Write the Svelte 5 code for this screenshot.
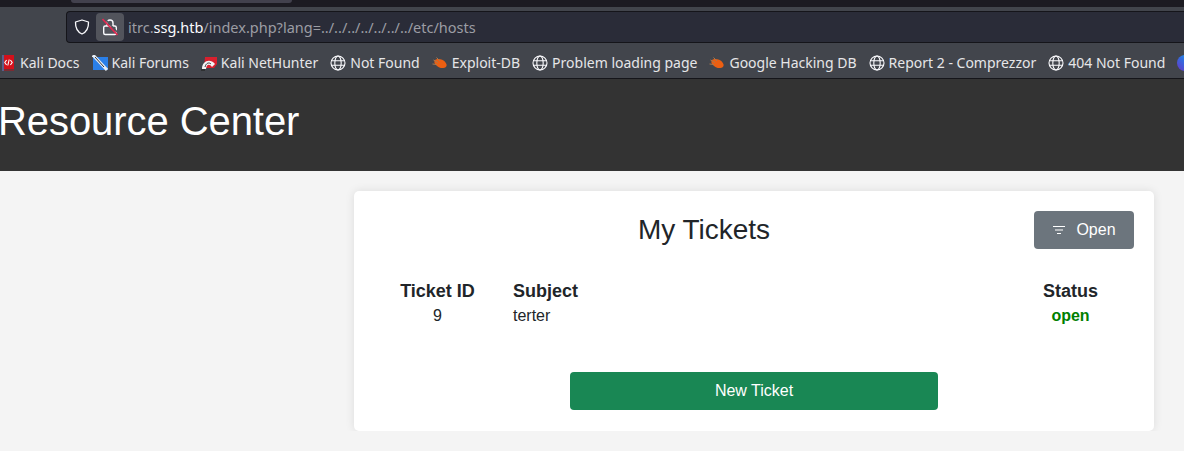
<script>
  const bookmarks = [
    { label: 'Kali Docs', icon: 'docs' },
    { label: 'Kali Forums', icon: 'forums' },
    { label: 'Kali NetHunter', icon: 'nethunter' },
    { label: 'Not Found', icon: 'globe' },
    { label: 'Exploit-DB', icon: 'bug' },
    { label: 'Problem loading page', icon: 'globe' },
    { label: 'Google Hacking DB', icon: 'bug' },
    { label: 'Report 2 - Comprezzor', icon: 'globe' },
    { label: '404 Not Found', icon: 'globe' },
    { label: '', icon: 'blob' }
  ];
</script>

<div class="browser">
  <div class="tabs"><div class="tab"></div></div>
  <div class="toolbar">
    <div class="urlbar">
      <svg class="shield" width="16" height="16" viewBox="0 0 16 16" fill="none" stroke="#fbfbfe" stroke-width="1.3">
        <path d="M8 1 L14.5 3 C14.7 9 12.5 13 8 15 C3.5 13 1.3 9 1.5 3 Z" stroke-linejoin="round" />
      </svg>
      <div class="lock">
        <svg width="16" height="18" viewBox="0 0 16 18" fill="none">
          <path d="M5 8 V5 a3 3 0 0 1 6 0 V8" stroke="#fbfbfe" stroke-width="1.4" />
          <rect x="1.7" y="8" width="12.6" height="8.5" rx="1.5" stroke="#fbfbfe" stroke-width="1.4" />
          <path d="M2 0 L17 16" stroke="#52545c" stroke-width="1.5" />
          <path d="M0.5 1 L15.5 17" stroke="#e22850" stroke-width="1.6" />
        </svg>
      </div>
      <span class="url">itrc.<b>ssg.htb</b>/index.php?lang=../../../../../../../etc/hosts</span>
    </div>
  </div>
  <div class="bookmarks">
    {#each bookmarks as b}
      <div class="bookmark">
        {#if b.icon === 'globe'}
          <svg width="16" height="16" viewBox="0 0 16 16" fill="none" stroke="#fbfbfe" stroke-width="1.1">
            <circle cx="8" cy="8" r="7" />
            <ellipse cx="8" cy="8" rx="3.2" ry="7" />
            <path d="M1 5.7 H15 M1 10.3 H15" />
          </svg>
        {:else if b.icon === 'bug'}
          <svg width="16" height="16" viewBox="0 0 16 16" fill="none">
            <ellipse cx="8.5" cy="8.5" rx="6.5" ry="4" transform="rotate(25 8.5 8.5)" fill="#ec5f12" />
            <path d="M1.5 5 L6 7.5 M0.5 9 L5 9.5 M4.5 2.5 L8 6" stroke="#a8794f" stroke-width="1" />
          </svg>
        {:else if b.icon === 'docs'}
          <svg width="16" height="16" viewBox="0 0 16 16">
            <rect x="2" y="0" width="12" height="15" fill="#d3111b" />
            <rect x="2" y="14" width="12" height="2" fill="#7c2b33" />
            <rect x="2" y="0" width="2" height="16" fill="#5a5f8c" />
            <path d="M6.6 5 L4.8 7.5 L6.6 10 M10.4 5 L12.2 7.5 L10.4 10 M9.2 4.5 L7.8 10.5" fill="none" stroke="#fff" stroke-width="1.1" />
          </svg>
        {:else if b.icon === 'forums'}
          <svg width="16" height="16" viewBox="0 0 16 16">
            <rect x="1" y="2" width="15" height="13" fill="#2a7fe8" />
            <path d="M1 0 L15 15" stroke="#e8eef5" stroke-width="3" />
            <path d="M3 2 L12 12" stroke="#33363b" stroke-width="1" />
          </svg>
        {:else if b.icon === 'nethunter'}
          <svg width="16" height="16" viewBox="0 0 16 16">
            <path d="M4 2 H16 V9 L13 13 H3 Z" fill="#d8202e" />
            <path d="M1 14 C1 6 9 3 14 9 L11 12 C8.5 8.5 5.5 9 5 14 Z" fill="#f4f4f4" />
            <path d="M4 12 C5 8 8 7 10 9" fill="none" stroke="#33363b" stroke-width="1" />
            <path d="M0 15 H4" stroke="#222" stroke-width="1.2" />
          </svg>
        {:else}
          <svg width="16" height="16" viewBox="0 0 16 16">
            <defs>
              <linearGradient id="blob-fill" x1="0" y1="1" x2="1" y2="0">
                <stop offset="0" stop-color="#6a35c9" />
                <stop offset="0.55" stop-color="#2f6fe0" />
                <stop offset="1" stop-color="#22b8e6" />
              </linearGradient>
            </defs>
            <circle cx="8" cy="8" r="8" fill="url(#blob-fill)" />
          </svg>
        {/if}
        {#if b.label}<span>{b.label}</span>{/if}
      </div>
    {/each}
  </div>
</div>

<header class="site-header">
  <h1>Resource Center</h1>
</header>

<main>
  <section class="card">
    <div class="card-top">
      <h3>My Tickets</h3>
      <button class="filter">
        <svg width="14" height="14" viewBox="0 0 14 14" fill="none" stroke="#fff" stroke-width="1.1">
          <path d="M1 3.5 H13 M3 7 H11 M5 10.5 H9" />
        </svg>
        Open
      </button>
    </div>
    <div class="tickets">
      <div class="col-id head">Ticket ID</div>
      <div class="head">Subject</div>
      <div class="col-status head">Status</div>
      <div class="col-id">9</div>
      <div>terter</div>
      <div class="col-status open">open</div>
    </div>
    <div class="actions">
      <button class="new-ticket">New Ticket</button>
    </div>
  </section>
</main>

<style>
  :global(body) {
    margin: 0;
    background: #f4f4f4;
    overflow: hidden;
    font-family: "Liberation Sans", Arial, sans-serif;
  }

  .tabs {
    height: 7px;
    background: #1c1b22;
    padding-left: 71px;
  }
  .tab {
    width: 221px;
    height: 3px;
    background: #42414d;
    border-radius: 0 0 4px 4px;
  }

  .toolbar {
    height: 36px;
    box-sizing: border-box;
    background: #42454c;
    padding: 4px 0 0 66px;
  }
  .urlbar {
    height: 32px;
    box-sizing: border-box;
    display: flex;
    align-items: center;
    background: #2a2c38;
    border: 1px solid #15151a;
    border-right: none;
    border-radius: 4px 0 0 4px;
    padding-left: 7px;
    font-family: "Noto Sans", sans-serif;
    font-size: 14.5px;
    color: #9c9da4;
  }
  .shield {
    flex: none;
  }
  .lock {
    width: 28px;
    height: 28px;
    margin: 0 4px 0 6px;
    display: flex;
    align-items: center;
    justify-content: center;
    background: #52545c;
    border-radius: 4px;
  }
  .url {
    margin-bottom: 1px;
  }
  .url b {
    font-weight: 400;
    color: #fbfbfe;
  }

  .bookmarks {
    height: 36px;
    box-sizing: border-box;
    background: #42454c;
    border-bottom: 1px solid #15151a;
    display: flex;
    align-items: center;
    padding: 4px 0 0 0;
    gap: 12px;
    font-family: "Noto Sans", sans-serif;
    font-size: 14px;
    color: #e6e6e8;
    white-space: nowrap;
  }
  .bookmark {
    display: flex;
    align-items: center;
    gap: 4px;
  }

  .site-header {
    height: 92px;
    background: #333;
    color: #fff;
    display: flex;
    align-items: center;
    padding-bottom: 8px;
    box-sizing: border-box;
  }
  h1 {
    margin: 0 0 0 -2px;
    font-size: 40px;
    font-weight: 400;
    letter-spacing: -0.07px;
  }

  main {
    padding: 20px 30px 0 354px;
  }
  .card {
    width: 800px;
    height: 240px;
    box-sizing: border-box;
    padding: 20px;
    background: #fff;
    border-radius: 5px;
    box-shadow: 0 0 10px rgba(0, 0, 0, 0.1);
    color: #212529;
  }
  .card-top {
    display: flex;
    align-items: center;
    justify-content: center;
    height: 38px;
    padding-right: 100px;
    position: relative;
  }
  h3 {
    margin: 0;
    font-size: 28px;
    font-weight: 500;
    line-height: 1.2;
  }
  .filter {
    position: absolute;
    right: 0;
    top: 0;
    width: 100px;
    height: 38px;
    border: none;
    border-radius: 4px;
    background: #6c757d;
    color: #fff;
    font: 16px "Liberation Sans", sans-serif;
    display: flex;
    align-items: center;
    justify-content: center;
    gap: 10px;
  }

  .tickets {
    display: grid;
    grid-template-columns: 127px 1fr 127px;
    column-gap: 12px;
    margin-top: 31px;
    font-size: 16px;
    line-height: 24px;
  }
  .head {
    font-size: 18px;
    font-weight: 700;
    line-height: 23px;
  }
  .col-id,
  .col-status {
    text-align: center;
    padding-top: 0;
  }
  .tickets > div:nth-child(n + 4) {
    padding-top: 1px;
  }
  .open {
    color: green;
    font-weight: 700;
  }

  .actions {
    display: flex;
    justify-content: center;
    margin-top: 44px;
  }
  .new-ticket {
    width: 368px;
    height: 38px;
    border: none;
    border-radius: 4px;
    background: #198754;
    color: #fff;
    font: 16px "Liberation Sans", sans-serif;
  }
</style>
